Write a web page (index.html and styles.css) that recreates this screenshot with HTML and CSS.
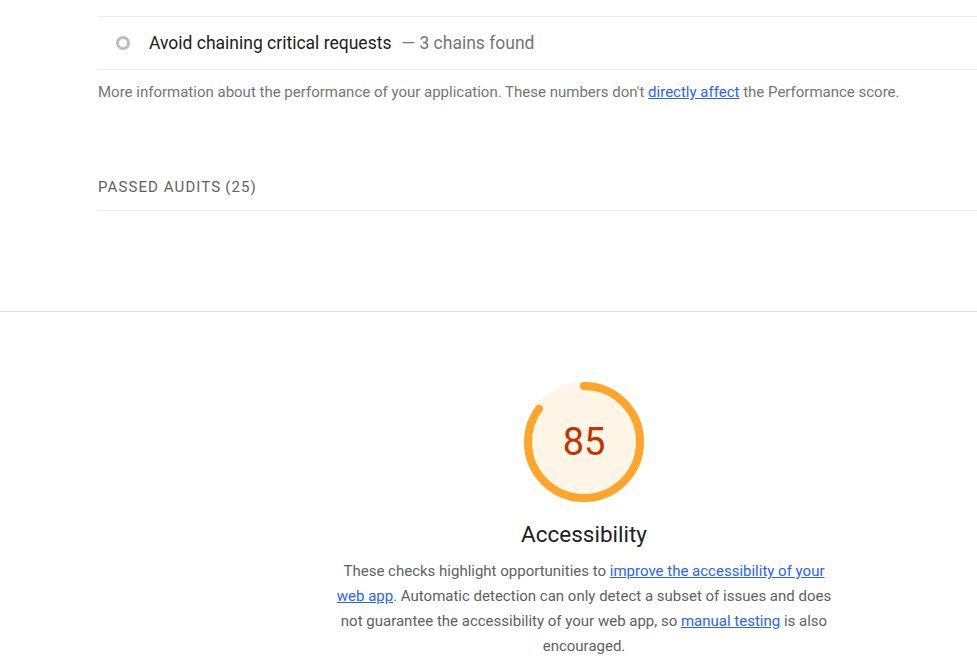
FILE: index.html
```html
<!DOCTYPE html>
<html lang="en">
<head>
<meta charset="utf-8">
<title>Lighthouse report</title>
<link rel="stylesheet" href="styles.css">
</head>
<body>
<div class="report">
  <section class="category perf">
    <div class="audit">
      <span class="score-icon"></span>
      <span class="audit-title">Avoid chaining critical requests</span>
      <span class="audit-display">— 3 chains found</span>
    </div>
    <p class="perf-desc">More information about the performance of your application. These numbers don't <a href="#">directly affect</a> the Performance score.</p>
    <div class="clump">PASSED AUDITS <span class="clump-count">(25)</span></div>
  </section>
  <section class="category a11y">
    <div class="gauge">
      <svg viewBox="0 0 120 120" width="120" height="120">
        <circle class="gauge-base" cx="60" cy="60" r="56"></circle>
        <circle class="gauge-arc" cx="60" cy="60" r="56" transform="rotate(-90 60 60)" stroke-dasharray="299.08 351.86"></circle>
      </svg>
      <span class="gauge-score">85</span>
    </div>
    <h2 class="cat-title">Accessibility</h2>
    <p class="cat-desc">These checks highlight opportunities to <a href="#">improve the accessibility of your web app</a>. Automatic detection can only detect a subset of issues and does not guarantee the accessibility of your web app, so <a href="#">manual testing</a> is also encouraged.</p>
  </section>
</div>
</body>
</html>
```
FILE: styles.css
```css
html, body {
  margin: 0;
  padding: 0;
  background: #fff;
  overflow: hidden;
}
body {
  font-family: Roboto, "Liberation Sans", Arial, sans-serif;
  width: 977px;
  height: 663px;
}
.report {
  width: 1070px;
}
a {
  color: #2962ff;
  text-decoration: underline;
}
.category {
  padding-left: 98px;
}
.perf {
  padding-top: 16px;
  padding-bottom: 100px;
  border-bottom: 1px solid #e0e0e0;
}
.audit {
  display: flex;
  align-items: center;
  height: 52px;
  border-top: 1px solid #ebebeb;
  border-bottom: 1px solid #ebebeb;
  padding-left: 18px;
  font-size: 17.5px;
}
.score-icon {
  width: 8px;
  height: 8px;
  border: 3px solid #bdbdbd;
  border-radius: 50%;
  margin-right: 19px;
  flex: none;
}
.audit-title {
  color: #212121;
}
.audit-display {
  color: #757575;
  margin-left: 10px;
}
.perf-desc {
  margin: 12px 0 0;
  font-size: 15px;
  line-height: 20px;
  color: #757575;
}
.clump {
  margin-top: 62px;
  height: 46px;
  display: flex;
  align-items: center;
  font-size: 15px;
  letter-spacing: 1.1px;
  color: #616161;
  border-bottom: 1px solid #ebebeb;
}
.clump-count {
  margin-left: 4px;
}
.a11y {
  padding-top: 70px;
  display: flex;
  flex-direction: column;
  align-items: center;
}
.gauge {
  position: relative;
  width: 120px;
  height: 120px;
}
.gauge svg {
  display: block;
}
.gauge-base {
  fill: #fff6e8;
  stroke: #fff6e8;
  stroke-width: 8;
}
.gauge-arc {
  fill: none;
  stroke: #ffa52c;
  stroke-width: 8;
  stroke-linecap: round;
}
.gauge-score {
  position: absolute;
  inset: 0;
  display: flex;
  align-items: center;
  justify-content: center;
  font-size: 38px;
  color: #c33300;
}
.cat-title {
  margin: 16px 0 0;
  font-size: 22.5px;
  font-weight: 400;
  line-height: 32px;
  color: #212121;
}
.cat-desc {
  margin: 9px 0 0;
  max-width: 500px;
  text-align: center;
  font-size: 15px;
  line-height: 25px;
  color: #616161;
}
```
